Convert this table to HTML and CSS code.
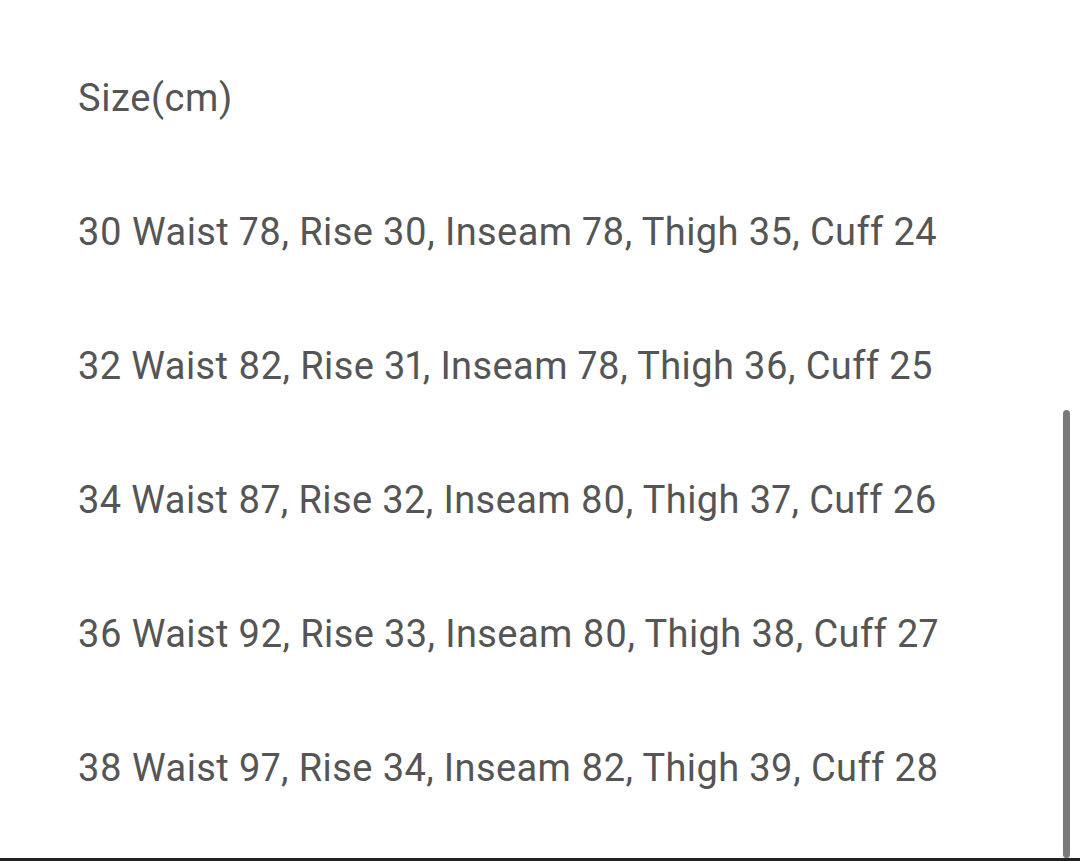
FILE: index.html
```html
<!DOCTYPE html>
<html>
<head>
<meta charset="utf-8">
<link rel="stylesheet" href="styles.css">
</head>
<body>
<div class="sheet">
  <p class="line title">Size(cm)</p>
  <p class="line">30 Waist 78, Rise 30, Inseam 78, Thigh 35, Cuff 24</p>
  <p class="line">32 Waist 82, Rise 31, Inseam 78, Thigh 36, Cuff 25</p>
  <p class="line">34 Waist 87, Rise 32, Inseam 80, Thigh 37, Cuff 26</p>
  <p class="line">36 Waist 92, Rise 33, Inseam 80, Thigh 38, Cuff 27</p>
  <p class="line">38 Waist 97, Rise 34, Inseam 82, Thigh 39, Cuff 28</p>
</div>
<div class="scrollbar"></div>
<div class="bottom-rule"></div>
</body>
</html>
```
FILE: styles.css
```css
html, body {
  margin: 0;
  padding: 0;
  background: #ffffff;
  width: 1080px;
  height: 861px;
  overflow: hidden;
}
.sheet {
  display: flex;
  flex-direction: column;
  padding: 31px 0 0 78px;
}
.line {
  margin: 0;
  font-family: Roboto, "Liberation Sans", sans-serif;
  font-size: 38px;
  line-height: 134px;
  letter-spacing: 0.4px;
  font-variant-numeric: proportional-nums;
  color: #555555;
  white-space: nowrap;
}
.title {
  letter-spacing: 0.6px;
}
.scrollbar {
  position: absolute;
  left: 1063px;
  top: 410px;
  width: 7px;
  height: 448px;
  border-radius: 4px;
  background: #7a7a7a;
}
.bottom-rule {
  position: absolute;
  left: 0;
  top: 858px;
  width: 1080px;
  height: 3px;
  background: #222222;
}
```
